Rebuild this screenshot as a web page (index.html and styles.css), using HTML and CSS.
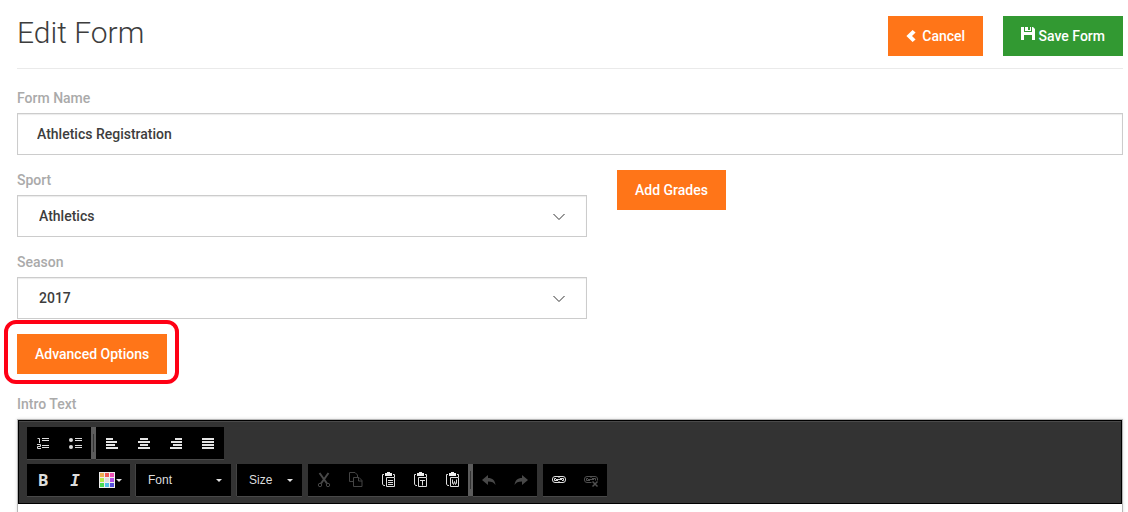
FILE: index.html
```html
<!DOCTYPE html>
<html lang="en">

<head>
    <meta charset="UTF-8">
    <meta name="viewport" content="width=device-width, initial-scale=1.0">
    <title>Edit Form</title>
    <link rel="stylesheet" href="styles.css">
</head>

<body>
    <main class="page">
        <header class="page-header">
            <h1>Edit Form</h1>
            <div class="actions">
                <button type="button" class="btn">
                    <svg class="icon-back" width="10" height="14" viewBox="0 0 10 14"><path fill="#fff" d="M6.6 1 9.6 3.6 6 7l3.6 3.4-3 2.6L.4 7z"/></svg>
                    Cancel
                </button>
                <button type="submit" class="btn btn-save" form="editForm">
                    <svg class="icon-save" width="14" height="14" viewBox="0 0 14 14"><path fill="#fff" d="M0 0h3v5h8V0h1l2 2v11h-3V8H3v5H0zM4 0h3v4H4zM9 0h1v4H9zM7 3h2v1H7z"/></svg>
                    Save Form
                </button>
            </div>
        </header>

        <form id="editForm">
            <div class="form-group">
                <label for="formName">Form Name</label>
                <input type="text" id="formName" class="control" value="Athletics Registration">
            </div>

            <div class="row">
                <div class="col">
                    <div class="form-group">
                        <label for="sport">Sport</label>
                        <div class="select-wrap">
                            <select id="sport" class="control">
                                <option>Athletics</option>
                            </select>
                            <svg class="chevron" width="12" height="8" viewBox="0 0 12 8"><path fill="none" stroke="#333" d="M.5 1 6 6.5 11.5 1"/></svg>
                        </div>
                    </div>
                    <div class="form-group">
                        <label for="season">Season</label>
                        <div class="select-wrap">
                            <select id="season" class="control">
                                <option>2017</option>
                            </select>
                            <svg class="chevron" width="12" height="8" viewBox="0 0 12 8"><path fill="none" stroke="#333" d="M.5 1 6 6.5 11.5 1"/></svg>
                        </div>
                    </div>
                </div>
                <div class="col">
                    <button type="button" class="btn">Add Grades</button>
                </div>
            </div>

            <div class="advanced">
                <button type="button" class="btn">Advanced Options</button>
            </div>

            <label for="introText">Intro Text</label>
            <div class="editor">
                <div class="toolbar">
                    <div class="toolbar-row">
                        <div class="tool-group">
                            <button type="button" class="tool" aria-label="Numbered list">
                                <svg width="16" height="16" viewBox="0 0 16 16"><path fill="none" stroke="#ddd" d="M2.500 3.500H4.500V8M2 9.500h3.500v2h-3v2H6M7 3.500h7M7 5.500h7M7 10.500h7M7 12.500h7"/></svg>
                            </button>
                            <button type="button" class="tool" aria-label="Bulleted list">
                                <svg width="16" height="16" viewBox="0 0 16 16"><path fill="none" stroke="#ddd" d="M8 3.500h7M8 5.500h7M8 10.500h7M8 12.500h7"/><circle cx="4" cy="5" r="2" fill="#ddd"/><circle cx="4" cy="12" r="2" fill="#ddd"/></svg>
                            </button>
                        </div>
                        <span class="tool-sep"></span>
                        <div class="tool-group">
                            <button type="button" class="tool" aria-label="Align left">
                                <svg width="16" height="16" viewBox="0 0 16 16"><path fill="#e4e4e4" d="M2 3h7v2H2zM2 6h11v2H2zM2 9h9v2H2zM2 12h12v2H2z"/></svg>
                            </button>
                            <button type="button" class="tool" aria-label="Align center">
                                <svg width="16" height="16" viewBox="0 0 16 16"><path fill="#e4e4e4" d="M4 3h8v2H4zM2 6h12v2H2zM4 9h8v2H4zM2 12h12v2H2z"/></svg>
                            </button>
                            <button type="button" class="tool" aria-label="Align right">
                                <svg width="16" height="16" viewBox="0 0 16 16"><path fill="#e4e4e4" d="M7 3h7v2H7zM3 6h11v2H3zM5 9h9v2H5zM2 12h12v2H2z"/></svg>
                            </button>
                            <button type="button" class="tool" aria-label="Justify">
                                <svg width="16" height="16" viewBox="0 0 16 16"><path fill="#e4e4e4" d="M2 3h12v2H2zM2 6h12v2H2zM2 9h12v2H2zM2 12h12v2H2z"/></svg>
                            </button>
                        </div>
                    </div>

                    <div class="toolbar-row">
                        <div class="tool-group spaced">
                            <button type="button" class="tool tool-bold">B</button>
                            <button type="button" class="tool tool-italic">I</button>
                            <button type="button" class="tool tool-color" aria-label="Text color">
                                <svg width="16" height="16" viewBox="0 0 16 16">
                                    <path fill="#eee" d="M0 0h16v16H0z"/>
                                    <path fill="#efad50" d="M1 1h4v4H1z"/><path fill="#ee5858" d="M6 1h4v4H6z"/><path fill="#ee50b5" d="M11 1h4v4h-4z"/>
                                    <path fill="#b6e84a" d="M1 6h4v4H1z"/><path fill="#ddd" d="M6 6h4v4H6z"/><path fill="#b04ce4" d="M11 6h4v4h-4z"/>
                                    <path fill="#48d956" d="M1 11h4v4H1z"/><path fill="#50bdea" d="M6 11h4v4H6z"/><path fill="#5450dc" d="M11 11h4v4h-4z"/>
                                </svg>
                                <svg width="7" height="3" viewBox="0 0 7 3"><path fill="#e4e4e4" d="M1 0h6L4 3z"/></svg>
                            </button>
                        </div>
                        <div class="tool-select tool-font spaced">
                            <select aria-label="Font">
                                <option>Font</option>
                            </select>
                            <svg class="caret" width="6" height="3" viewBox="0 0 6 3"><path fill="#e4e4e4" d="M0 0h6L3 3z"/></svg>
                        </div>
                        <div class="tool-select tool-size spaced">
                            <select aria-label="Size">
                                <option>Size</option>
                            </select>
                            <svg class="caret" width="6" height="3" viewBox="0 0 6 3"><path fill="#e4e4e4" d="M0 0h6L3 3z"/></svg>
                        </div>
                        <div class="tool-group">
                            <button type="button" class="tool" aria-label="Cut" disabled>
                                <svg width="16" height="16" viewBox="0 0 16 16"><g fill="none" stroke="#484848"><path stroke-width="2" d="M3.500 1 11 11.500M12.500 1 5 11.500"/><circle cx="4" cy="13" r="1.700"/><circle cx="12" cy="13" r="1.700"/></g></svg>
                            </button>
                            <button type="button" class="tool" aria-label="Copy" disabled>
                                <svg width="16" height="16" viewBox="0 0 16 16"><path fill="none" stroke="#444" d="M5 9.500H1.500v-9H7L9.500 3v2M5.500 5.500h5.500l3 3v6H5.500zM10.500 5.500v3.500H14"/></svg>
                            </button>
                            <button type="button" class="tool" aria-label="Paste">
                                <svg width="16" height="16" viewBox="0 0 16 16"><path fill="#eee" d="M7 0h3v1h2v3H5V1h2z"/><path fill="none" stroke="#ddd" d="M4 2.500H2.500V12l1 1.500H5M13 2.500h1.500V5M6.500 5.500h8v9h-8zM8 8.500h5M8 10.500h5M8 12.500h5"/></svg>
                            </button>
                            <button type="button" class="tool" aria-label="Paste as plain text">
                                <svg width="16" height="16" viewBox="0 0 16 16"><path fill="#eee" d="M7 0h3v1h2v3H5V1h2z"/><path fill="none" stroke="#ddd" d="M4 2.500H2.500V12l1 1.500H5M13 2.500h1.500V5M6.500 5.500h8v9h-8zM8 8.500h5M10.500 8.500v5"/></svg>
                            </button>
                            <button type="button" class="tool" aria-label="Paste from Word">
                                <svg width="16" height="16" viewBox="0 0 16 16"><path fill="#eee" d="M7 0h3v1h2v3H5V1h2z"/><path fill="none" stroke="#ddd" d="M4 2.500H2.500V12l1 1.500H5M13 2.500h1.500V5M6.500 5.500h8v9h-8zM8.500 7.500V11l1 1.500 1-3 1 3 1-1.500V7.500"/></svg>
                            </button>
                        </div>
                        <span class="tool-sep"></span>
                        <div class="tool-group spaced">
                            <button type="button" class="tool" aria-label="Undo" disabled>
                                <svg width="16" height="16" viewBox="0 0 16 16"><path fill="#484848" d="M1 8 7 3v3c4.500 0 7 2.500 7.500 7C13 10.500 11 9.500 7 9.500V13z"/></svg>
                            </button>
                            <button type="button" class="tool" aria-label="Redo" disabled>
                                <svg width="16" height="16" viewBox="0 0 16 16"><path fill="#484848" d="M15 8 9 3v3C4.500 6 2 8.500 1.500 13 3 10.500 5 9.500 9 9.500V13z"/></svg>
                            </button>
                        </div>
                        <div class="tool-group">
                            <button type="button" class="tool" aria-label="Link">
                                <svg width="16" height="16" viewBox="0 0 16 16"><g fill="none" stroke="#ddd"><rect x="1.500" y="4.500" width="13" height="6" rx="2.500"/><path d="M5 6.500H3.500v2H7M9 6.500h3.500v2H11M5 7.500h6M8 4v2M8 9v2"/></g></svg>
                            </button>
                            <button type="button" class="tool" aria-label="Unlink" disabled>
                                <svg width="16" height="16" viewBox="0 0 16 16"><g fill="none" stroke="#505050"><path d="M8.500 10.500H4a2.500 2.500 0 0 1-2.500-2.500V7A2.500 2.500 0 0 1 4 4.500h8A2.500 2.500 0 0 1 14.500 7v1.500M5 6.500H3.500v2H7M9 6.500h3.500v2M5 7.500h6M8 4v2"/><path stroke-width="1.500" d="M9.500 9.500l5 5M14.500 9.500l-5 5"/></g></svg>
                            </button>
                        </div>
                    </div>
                </div>
                <textarea id="introText"></textarea>
            </div>
        </form>
    </main>
</body>

</html>
```
FILE: styles.css
```css
* {
    box-sizing: border-box;
}

body {
    margin: 0;
    background-color: #fff;
    color: #3d3d3d;
    font-family: Roboto, sans-serif;
    font-size: 14px;
    line-height: 20px;
}

button,
input,
select,
textarea {
    font: inherit;
    color: inherit;
    margin: 0;
}

.page {
    padding: 0 5px 20px 17px;
}

.page-header {
    display: flex;
    justify-content: space-between;
    padding: 16px 0 12px;
    border-bottom: 1px solid #eaeaea;
    margin-bottom: 19px;
}

h1 {
    margin: 0;
    font-size: 30px;
    font-weight: 300;
    line-height: 34px;
}

.actions {
    display: flex;
    gap: 20px;
}

.btn {
    height: 40px;
    padding: 0 18px;
    border: none;
    background-color: #ff7518;
    color: #fff;
    font-weight: 500;
    cursor: pointer;
}

.btn:hover {
    background-color: #e66510;
}

.btn-save {
    background-color: #329932;
}

.btn-save:hover {
    background-color: #2a842a;
}

.icon-back {
    margin-right: 3px;
    vertical-align: -2px;
}

.icon-save {
    vertical-align: 0;
}

label {
    display: block;
    margin-bottom: 5px;
    color: #aaa;
    font-weight: 500;
}

.form-group {
    margin-bottom: 15px;
}

.control {
    display: block;
    width: 100%;
    height: 42px;
    padding: 0 19px;
    border: 1px solid #ccc;
    border-radius: 0;
    background-color: #fff;
    box-shadow: inset 0 1px 1px rgba(0, 0, 0, 0.08);
    font-weight: 500;
}

select.control {
    appearance: none;
    padding: 0 21px;
}

.select-wrap {
    position: relative;
}

.chevron {
    position: absolute;
    right: 22px;
    top: 18px;
    pointer-events: none;
}

.row {
    display: grid;
    grid-template-columns: 570fr 506fr;
    gap: 30px;
}

.advanced {
    position: relative;
    width: fit-content;
    margin-bottom: 20px;
}

.advanced .btn {
    display: block;
}

/* red callout round the button */
.advanced::after {
    content: "";
    position: absolute;
    inset: -14px -12px -10px -13px;
    border: 4px solid #ff0015;
    border-radius: 12px;
    pointer-events: none;
}

.editor {
    border: 1px solid #b6b6b6;
    box-shadow: 0 0 3px rgba(0, 0, 0, 0.15);
}

.toolbar {
    display: flex;
    flex-direction: column;
    gap: 5px;
    padding: 6px 8px 7px;
    border: 1px solid #000;
    background-color: #333;
    box-shadow: inset 0 1px 0 #4a4a4a;
}

.toolbar-row {
    display: flex;
}

.tool-group {
    display: flex;
    background-color: #000;
    box-shadow: 0 1px 0 #494949;
}

.spaced {
    margin-right: 6px;
}

.tool {
    display: flex;
    align-items: center;
    justify-content: center;
    width: 32px;
    height: 32px;
    padding: 0;
    border: none;
    background: none;
    color: #ddd;
    cursor: pointer;
}

.tool:disabled {
    cursor: default;
}

.tool-bold {
    font: bold 16px "Open Sans", Arial, sans-serif;
}

.tool-italic {
    font: italic bold 16px "DejaVu Sans Mono", monospace;
}

.tool-color {
    width: 39px;
}

.tool-sep {
    width: 5px;
    background: linear-gradient(#333, #333) center / 1px 18px no-repeat, #5c5c5c;
}

.tool-select {
    position: relative;
    background-color: #000;
    box-shadow: -1px 0 0 #444, 0 1px 0 #494949;
}

.tool-select select {
    appearance: none;
    display: block;
    width: 100%;
    height: 32px;
    padding: 0 12px;
    border: none;
    background: none;
    color: #ddd;
    font: 12px "Liberation Sans", Arial, sans-serif;
}

.tool-font {
    width: 95px;
}

.tool-size {
    width: 65px;
}

.caret {
    position: absolute;
    right: 9px;
    top: 15px;
    pointer-events: none;
}

textarea {
    display: block;
    width: 100%;
    height: 200px;
    padding: 10px;
    border: none;
    resize: vertical;
}
```
